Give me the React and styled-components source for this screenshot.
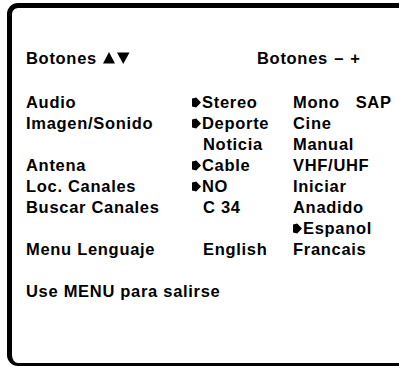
import styled, { createGlobalStyle } from "styled-components";

const GlobalStyle = createGlobalStyle`
  html, body {
    margin: 0;
    padding: 0;
    background: #ffffff;
    overflow: hidden;
  }
`;

const rows = [
  { label: "Audio", value: "Stereo", mark: true, extra: "Mono   SAP" },
  { label: "Imagen/Sonido", value: "Deporte", mark: true, extra: "Cine" },
  { label: "", value: "Noticia", extra: "Manual" },
  { label: "Antena", value: "Cable", mark: true, extra: "VHF/UHF" },
  { label: "Loc. Canales", value: "NO", mark: true, extra: "Iniciar" },
  { label: "Buscar Canales", value: "C 34", extra: "Anadido" },
  { label: "", value: "", extra: "Espanol", extraMark: true },
  { label: "Menu Lenguaje", value: "English", extra: "Francais" },
];

function Pointer() {
  return (
    <PointerSvg viewBox="0 0 9 11" width="9" height="11">
      <path d="M0 1.6 L4.2 0.4 L9 5.5 L4.2 10.6 L0 9.4 Z" fill="#000" />
    </PointerSvg>
  );
}

function Arrows() {
  return (
    <ArrowSvg viewBox="0 0 27 12" width="27" height="12">
      <path d="M6 0 L12 11.5 L0 11.5 Z" fill="#000" />
      <path d="M14 0.5 L26.5 0.5 L20.25 12 Z" fill="#000" />
    </ArrowSvg>
  );
}

export default function App() {
  return (
    <>
      <GlobalStyle />
      <Screen>
        <Header>
          <HeadText>
            <span>Botones</span>
            <Arrows />
          </HeadText>
          <HeadRight>Botones – +</HeadRight>
        </Header>
        <Menu>
          {rows.map((row, i) => (
            <Row key={i}>
              <Label>{row.label}</Label>
              <Value $indent={!row.mark && row.value !== ""}>
                {row.mark && <Pointer />}
                {row.value}
              </Value>
              <Extra>
                {row.extraMark && <Pointer />}
                {row.extra}
              </Extra>
            </Row>
          ))}
        </Menu>
        <Footer>Use MENU para salirse</Footer>
      </Screen>
    </>
  );
}

const Screen = styled.div`
  box-sizing: border-box;
  margin: 3px 0 0 7px;
  width: 440px;
  height: 363px;
  border: 5px solid #000;
  border-right: none;
  border-bottom-width: 3px;
  border-radius: 11px 0 0 11px;
  padding: 40px 0 0 14px;
  font-family: "Liberation Sans", Arial, sans-serif;
  font-weight: bold;
  font-size: 16.5px;
  line-height: 21px;
  color: #000;
  letter-spacing: 0.7px;
`;

const Header = styled.div`
  display: flex;
  align-items: center;
  height: 21px;
  margin-bottom: 23px;
`;

const HeadText = styled.div`
  display: flex;
  align-items: center;
  gap: 6px;
  width: 231px;
`;

const HeadRight = styled.div`
  white-space: pre;
  word-spacing: 1px;
`;

const ArrowSvg = styled.svg`
  display: block;
  margin-top: -1px;
`;

const Menu = styled.div`
  display: flex;
  flex-direction: column;
`;

const Row = styled.div`
  display: grid;
  grid-template-columns: 166px 101px 1fr;
  height: 21px;
  white-space: pre;
`;

const Label = styled.div``;

const Value = styled.div`
  display: flex;
  align-items: center;
  padding-left: ${(p) => (p.$indent ? "11px" : "0")};
`;

const Extra = styled.div`
  display: flex;
  align-items: center;
`;

const PointerSvg = styled.svg`
  display: block;
  margin-right: 1px;
  margin-top: -1px;
`;

const Footer = styled.div`
  margin-top: 21px;
`;
